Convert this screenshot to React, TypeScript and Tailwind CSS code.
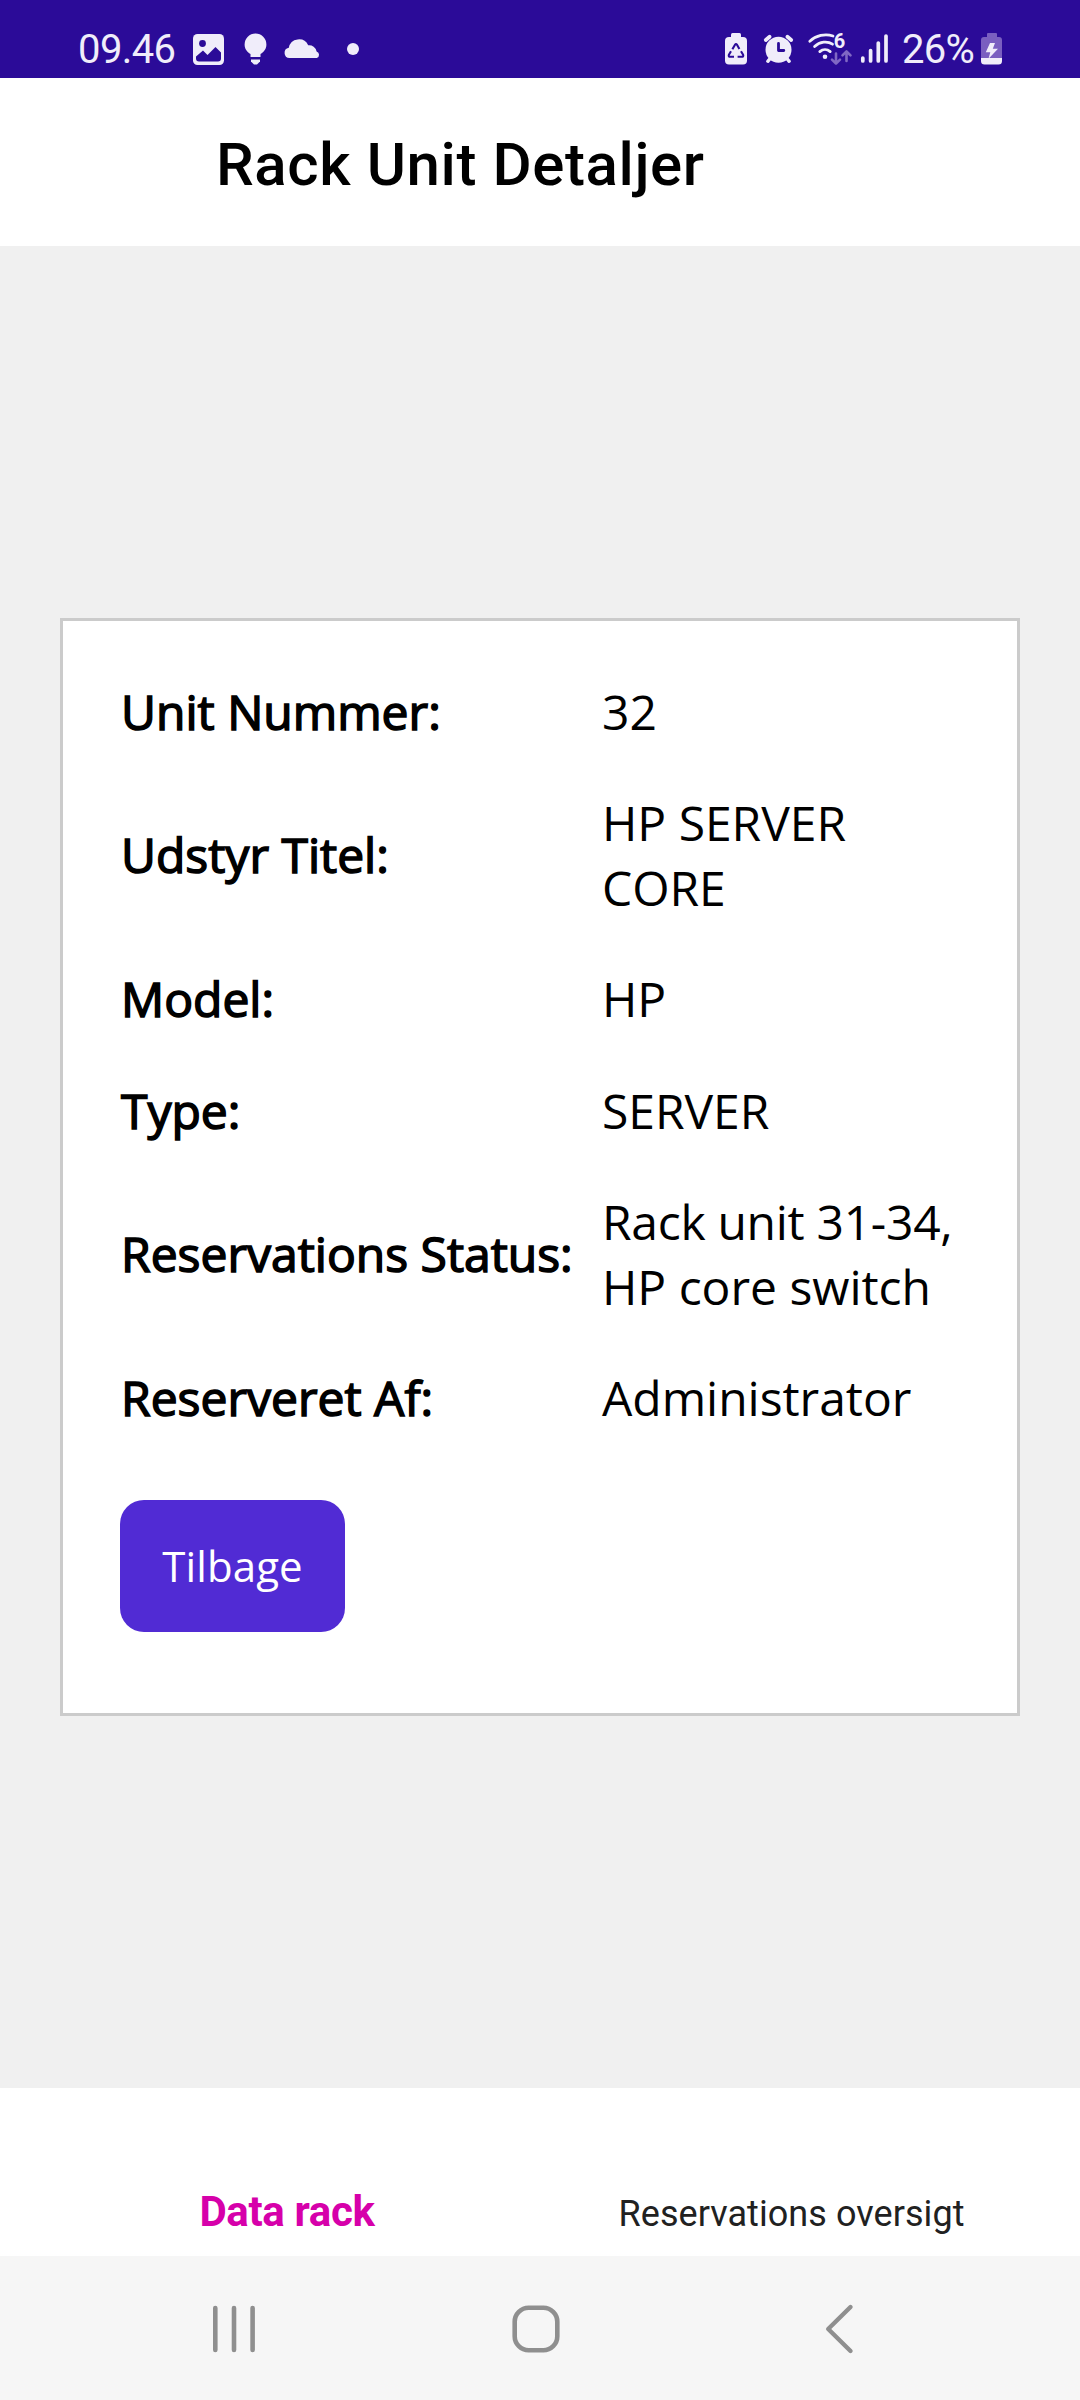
import React from "react";

const INK = "#f0edfa";
const BAR = "#2b0b98";
const DIM = "#8068c4";

function NotificationIcons() {
  return (
    <svg width="180" height="38" viewBox="193 30 180 38" className="shrink-0">
      {/* picture */}
      <rect x="193" y="34" width="31" height="31" rx="4.5" fill={INK} />
      <circle cx="202.5" cy="43.5" r="3.4" fill={BAR} />
      <path d="M196 56.5L203 50.5L207.5 55L215.5 47L221 52.5V58.5Q221 61.5 218 61.5H199Q196 61.5 196 58.5Z" fill={BAR} />
      {/* light bulb */}
      <path d="M255.5 33.5A10.9 10.9 0 0 1 266.4 44.4C266.4 49 264 51.5 260.5 54V57H250.5V54C247 51.5 244.6 49 244.6 44.4A10.9 10.9 0 0 1 255.5 33.5Z" fill={INK} />
      <path d="M251 59.5H260V61.5L257 64.5H254L251 61.5Z" fill={INK} />
      {/* cloud */}
      <path d="M289.5 58A5.2 5.2 0 0 1 288.8 47.7A10.3 10.3 0 0 1 308.2 45.2A7.6 7.6 0 0 1 316.6 51.4A3.5 3.5 0 0 1 316.8 58Z" fill={INK} />
      <circle cx="353" cy="49" r="6" fill={INK} />
    </svg>
  );
}

function SystemIcons() {
  return (
    <svg width="180" height="38" viewBox="720 30 180 38" className="shrink-0" fill="none" strokeLinecap="round" strokeLinejoin="round">
      {/* battery protection */}
      <rect x="731" y="33" width="10" height="8" rx="1.5" fill={INK} />
      <rect x="725" y="37" width="22" height="27.5" rx="4" fill={INK} />
      <g stroke={BAR} strokeWidth="2.1" strokeLinecap="butt">
        <path d="M732.4 49.3L735 44.8Q736 43.2 737 44.8L739.4 49" />
        <path d="M731 51.3L728.9 54.8Q728.2 56.8 730.3 56.8H734" />
        <path d="M741 51.3L743.1 54.8Q743.8 56.8 741.7 56.8H737.6" />
      </g>
      {/* alarm clock */}
      <circle cx="778.5" cy="49.7" r="13" fill={INK} />
      <g stroke={INK} strokeWidth="3.8">
        <path d="M765.8 40L769.6 36.8M791.2 40L787.4 36.8" />
        <path d="M770.5 58L767.8 61.3M786.5 58L789.2 61.3" strokeWidth="3.4" />
      </g>
      <path d="M778.5 43.5V50.5H783.8" stroke={BAR} strokeWidth="2.8" />
      {/* wifi */}
      <g stroke={INK} strokeWidth="2.8">
        <path d="M809.8 41.3C816 35.5 825 33.2 833 36" />
        <path d="M814.6 46.6C819.8 41.5 827.5 40.8 832.5 44.2" />
        <path d="M819.8 51.6C822.9 48.9 827.1 48.9 830.2 51.6" />
      </g>
      <circle cx="825" cy="56.7" r="2.3" fill={INK} />
      <text x="833.8" y="48" fill={INK} fontSize="20" fontWeight="700" fontFamily="Roboto, sans-serif">6</text>
      <g stroke={DIM} strokeWidth="2.6">
        <path d="M836 53.5V63.5M832 59.7L836 63.7L840 59.7" />
        <path d="M846.5 61V51.5M842.5 55.3L846.5 51.3L850.5 55.3" />
      </g>
      {/* signal */}
      <path d="M862.8 58V61M870.6 50.5V61M878.3 43V61M886 36V61" stroke={INK} strokeWidth="3.7" />
    </svg>
  );
}

function ChargingBattery() {
  return (
    <svg width="22" height="38" viewBox="981 30 22 38" className="shrink-0">
      <path d="M988 33H996Q997 33 997 34V37H999Q1002 37 1002 40V58H981V40Q981 37 984 37H987V34Q987 33 988 33Z" fill="#7a5fc0" />
      <path d="M981 58H1002V61Q1002 64.5 998.5 64.5H984.5Q981 64.5 981 61Z" fill={INK} />
      <path d="M990 43H995L992.8 48.8H998L988.5 58.8L990.3 52.3H985.8Z" fill={INK} />
    </svg>
  );
}

function StatusBar() {
  return (
    <header className="flex h-[78px] shrink-0 items-end justify-between bg-[#2b0b98] pr-[77px] pb-[10px] pl-[78px] text-[#f0edfa]">
      <div className="flex h-[38px] items-center">
        <span className="w-[115px] shrink-0 pt-px text-[40px] leading-[37px] tracking-[-0.6px] whitespace-nowrap">09.46</span>
        <NotificationIcons />
      </div>
      <div className="flex h-[38px] items-center">
        <SystemIcons />
        <span className="w-[81px] shrink-0 pt-px pl-[2px] text-[40px] leading-[37px] tracking-[-0.7px] whitespace-nowrap">26%</span>
        <ChargingBattery />
      </div>
    </header>
  );
}

const rows = [
  { label: "Unit Nummer:", value: ["32"], size: "h-[112px]" },
  { label: "Udstyr Titel:", value: ["HP SERVER CORE"], size: "h-[175px]" },
  { label: "Model:", value: ["HP"], size: "h-[112px]" },
  { label: "Type:", value: ["SERVER"], size: "h-[112px]" },
  { label: "Reservations Status:", value: ["Rack unit 31-34,", "HP core switch"], size: "h-[175px]" },
  { label: "Reserveret Af:", value: ["Administrator"], size: "h-[112px]" },
];

export default function App() {
  return (
    <div className="flex h-[2400px] w-[1080px] flex-col bg-white font-['Roboto',sans-serif]">
      <StatusBar />
      <div className="flex h-[168px] shrink-0 items-center pt-[5px] pl-[216px]">
        <h1 className="text-[60px] leading-[70px] font-medium tracking-[0.6px] whitespace-nowrap text-black">Rack Unit Detaljer</h1>
      </div>
      <main className="flex flex-1 flex-col items-center justify-center bg-[#f0f0f0]">
        <section className="h-[1098px] w-[960px] border-[3px] border-[#cbcbcb] bg-white px-[57px] pt-[34px] font-['Open_Sans',sans-serif] text-[48px] leading-[65px] text-black">
          {rows.map((r) => (
            <div key={r.label} className={`flex items-center pl-px ${r.size}`}>
              <div className="w-[481px] shrink-0 whitespace-nowrap [-webkit-text-stroke:1.5px_#000]">{r.label}</div>
              <div className="w-[358px]">
                {r.value.map((line, i) => (
                  <p key={line} className={r.value.length > 1 && i === 0 ? "tracking-[-0.3px]" : "tracking-[-0.03px]"}>
                    {line}
                  </p>
                ))}
              </div>
            </div>
          ))}
          <button className="mt-[47px] flex h-[132px] w-[225px] items-center justify-center rounded-[24px] bg-[#512bd4] pb-[2px] text-[42px] leading-[57px] tracking-[0.1px] text-white">
            Tilbage
          </button>
        </section>
      </main>
      <nav className="flex h-[168px] shrink-0 justify-center">
        <div className="flex w-[504px] items-end justify-center pr-[2px] pb-[20px] text-[42px] leading-[49px] font-bold tracking-[-0.35px] text-[#d600aa]">Data rack</div>
        <div className="flex w-[504px] items-end justify-center pr-px pb-[21px] text-[36px] leading-[42px] tracking-[0.06px] text-[#212121]">Reservations oversigt</div>
      </nav>
      <footer className="flex h-[144px] shrink-0 items-center bg-[#f6f6f6] pt-[2px] pl-[210px]">
        <svg width="48" height="52" viewBox="210 2303 48 52" stroke="#8f8f8f" strokeWidth="4.6" strokeLinecap="round">
          <path d="M215.3 2308V2350M234 2308V2350M252.6 2308V2350" />
        </svg>
        <svg className="ml-[252px]" width="52" height="52" viewBox="510 2303 52 52" fill="none" stroke="#8f8f8f" strokeWidth="4.6">
          <rect x="514.7" y="2307.7" width="42.6" height="42.6" rx="14" />
        </svg>
        <svg className="ml-[263px]" width="30" height="52" viewBox="825 2303 30 52" fill="none" stroke="#8f8f8f" strokeWidth="4.4" strokeLinecap="round" strokeLinejoin="round">
          <path d="M850.5 2307L828.2 2329L850.5 2351" />
        </svg>
      </footer>
    </div>
  );
}
